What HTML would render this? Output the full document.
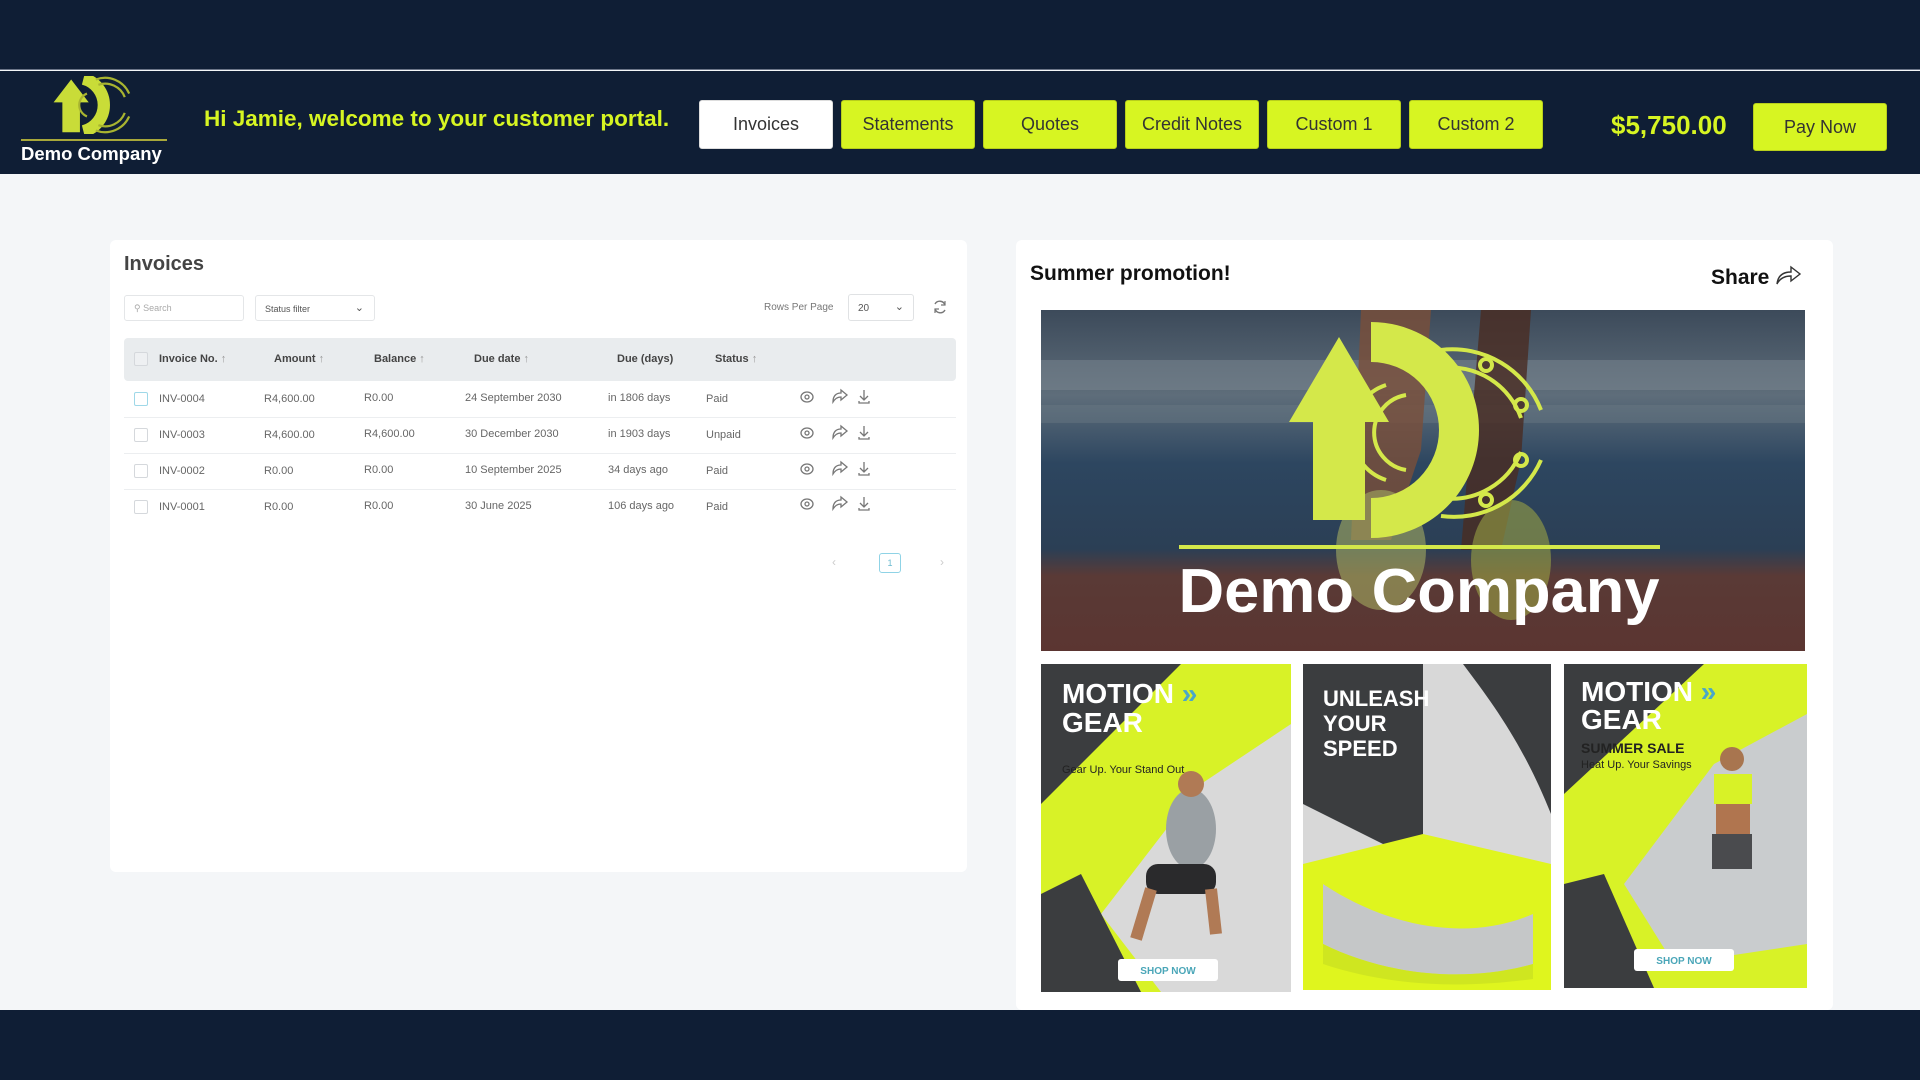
<!DOCTYPE html>
<html><head><meta charset="utf-8"><style>
*{margin:0;padding:0;box-sizing:border-box}
body{width:1920px;height:1080px;background:#f4f6f8;font-family:"Liberation Sans",sans-serif;position:relative;overflow:hidden}
.a{position:absolute}
.top{left:0;top:0;width:1920px;height:70px;background:#0f1e35;border-bottom:1px solid #6b7588}
.hdr{left:0;top:71px;width:1920px;height:103px;background:#0f1e35}
.bot{left:0;top:1010px;width:1920px;height:70px;background:#0f1e35}
.btn{top:100px;width:134px;height:49px;background:#d7f522;border-radius:3px;color:#333;font-size:18px;display:flex;align-items:center;justify-content:center;border:1px solid #b8cf1c}
.card{background:#fff;border-radius:6px}
.th{font-size:11px;font-weight:bold;color:#444}
.td{font-size:11px;color:#666}
.cb{width:14px;height:14px;border:1px solid #d5d8dc;border-radius:2px;background:#fff}
.rowline{left:124px;width:832px;height:1px;background:#eceef0}
</style></head><body>
<div class="a top"></div>
<div class="a hdr"></div>
<div class="a bot"></div>

<!-- header logo -->
<svg class="a" style="left:50px;top:76px" width="88" height="58" viewBox="0 0 100 66">
<polygon points="4,30 24,4 44,30 34,30 34,64 14,64 14,30" fill="#c9dc38"/>
<path d="M38 3 A31 31 0 0 1 38 63" fill="none" stroke="#c9dc38" stroke-width="14"/>
<g fill="none" stroke="#a8b430" stroke-width="2.5"><path d="M52 4 A30 30 0 0 1 90 20"/><path d="M55 10 A24 24 0 0 1 85 24"/><path d="M52 62 A30 30 0 0 0 90 46"/><path d="M55 56 A24 24 0 0 0 85 42"/><path d="M42 20 A14 14 0 0 0 42 46"/></g>
</svg>
<div class="a" style="left:21px;top:139px;width:146px;height:2px;background:#a8a83a"></div>
<div class="a" style="left:21px;top:143px;width:150px;color:#fff;font-weight:bold;font-size:18.5px">Demo Company</div>

<div class="a" style="left:204px;top:106px;color:#d7f522;font-weight:bold;font-size:22.5px">Hi Jamie, welcome to your customer portal.</div>

<div class="a btn" style="left:699px;background:#fff;border-color:#ddd">Invoices</div>
<div class="a btn" style="left:841px">Statements</div>
<div class="a btn" style="left:983px">Quotes</div>
<div class="a btn" style="left:1125px">Credit Notes</div>
<div class="a btn" style="left:1267px">Custom 1</div>
<div class="a btn" style="left:1409px">Custom 2</div>
<div class="a" style="left:1611px;top:110px;color:#d7f522;font-weight:bold;font-size:26px">$5,750.00</div>
<div class="a btn" style="left:1753px;top:103px;height:48px">Pay Now</div>

<!-- invoices card -->
<div class="a card" style="left:110px;top:240px;width:857px;height:632px"></div>
<div class="a" style="left:124px;top:253px;font-size:20px;color:#444;font-weight:bold">Invoices</div>
<div class="a" style="left:124px;top:295px;width:120px;height:26px;border:1px solid #e4e6e8;border-radius:3px;font-size:9px;color:#aaa;padding:7px 0 0 9px">&#9906; Search</div>
<div class="a" style="left:255px;top:295px;width:120px;height:26px;border:1px solid #e4e6e8;border-radius:3px;font-size:9px;color:#555;padding:8px 0 0 9px">Status filter<span style="position:absolute;right:10px;top:5px;font-size:11px">&#8964;</span></div>
<div class="a" style="left:764px;top:302px;font-size:10px;color:#777">Rows Per Page</div>
<div class="a" style="left:848px;top:294px;width:66px;height:27px;border:1px solid #e0e2e4;border-radius:3px;font-size:10px;color:#555;padding:8px 0 0 9px">20<span style="position:absolute;right:9px;top:5px;font-size:11px">&#8964;</span></div>
<svg class="a" style="left:932px;top:299px" width="16" height="16" viewBox="0 0 16 16"><path d="M13 6 A5.5 5.5 0 0 0 3 5 M3 10 A5.5 5.5 0 0 0 13 11" fill="none" stroke="#777" stroke-width="1.4"/><path d="M13 2v4h-4 M3 14v-4h4" fill="none" stroke="#777" stroke-width="1.2"/></svg>

<div class="a" style="left:124px;top:338px;width:832px;height:43px;background:#e9ecee;border-radius:4px"></div>
<div class="a cb" style="left:134px;top:352px;background:#eef0f2"></div>
<div class="a th" style="left:159px;top:353px">Invoice No. <span style="color:#999">&#8593;</span></div>
<div class="a th" style="left:274px;top:353px">Amount <span style="color:#999">&#8593;</span></div>
<div class="a th" style="left:374px;top:353px">Balance <span style="color:#999">&#8593;</span></div>
<div class="a th" style="left:474px;top:353px">Due date <span style="color:#999">&#8593;</span></div>
<div class="a th" style="left:617px;top:353px">Due (days)</div>
<div class="a th" style="left:715px;top:353px">Status <span style="color:#999">&#8593;</span></div>

<div class="a cb" style="left:134px;top:392px;border-color:#9fd8e8"></div>
<div class="a td" style="left:159px;top:393px">INV-0004</div><div class="a td" style="left:264px;top:393px">R4,600.00</div><div class="a td" style="left:364px;top:392px">R0.00</div><div class="a td" style="left:465px;top:392px">24 September 2030</div><div class="a td" style="left:608px;top:392px">in 1806 days</div><div class="a td" style="left:706px;top:393px">Paid</div>
<div class="a rowline" style="top:417px"></div>
<div class="a cb" style="left:134px;top:428px"></div>
<div class="a td" style="left:159px;top:429px">INV-0003</div><div class="a td" style="left:264px;top:429px">R4,600.00</div><div class="a td" style="left:364px;top:428px">R4,600.00</div><div class="a td" style="left:465px;top:428px">30 December 2030</div><div class="a td" style="left:608px;top:428px">in 1903 days</div><div class="a td" style="left:706px;top:429px">Unpaid</div>
<div class="a rowline" style="top:453px"></div>
<div class="a cb" style="left:134px;top:464px"></div>
<div class="a td" style="left:159px;top:465px">INV-0002</div><div class="a td" style="left:264px;top:465px">R0.00</div><div class="a td" style="left:364px;top:464px">R0.00</div><div class="a td" style="left:465px;top:464px">10 September 2025</div><div class="a td" style="left:608px;top:464px">34 days ago</div><div class="a td" style="left:706px;top:465px">Paid</div>
<div class="a rowline" style="top:489px"></div>
<div class="a cb" style="left:134px;top:500px"></div>
<div class="a td" style="left:159px;top:501px">INV-0001</div><div class="a td" style="left:264px;top:501px">R0.00</div><div class="a td" style="left:364px;top:500px">R0.00</div><div class="a td" style="left:465px;top:500px">30 June 2025</div><div class="a td" style="left:608px;top:500px">106 days ago</div><div class="a td" style="left:706px;top:501px">Paid</div>

<svg class="a" style="left:796px;top:386px" width="84" height="130" viewBox="0 0 84 130">
<g fill="none" stroke="#777" stroke-width="1.3">
<g id="r"><ellipse cx="11" cy="11" rx="6" ry="5"/><circle cx="11" cy="11" r="2"/><path d="M37 16 C37 10 40 7 45 7 V4 L51 9 L45 14 V11 C41 11 39 13 37 16 Z"/><path d="M68 4 V13 M64 10 L68 14 L72 10 M63 15 V17 H73 V15"/></g>
<use href="#r" y="36"/><use href="#r" y="72"/><use href="#r" y="107"/>
</g></svg>

<div class="a" style="left:832px;top:555px;color:#ccc;font-size:12px">&#8249;</div>
<div class="a" style="left:879px;top:553px;width:22px;height:20px;border:1px solid #8fd3e6;border-radius:3px;font-size:9px;color:#6bbad0;text-align:center;padding-top:4px">1</div>
<div class="a" style="left:940px;top:555px;color:#ccc;font-size:12px">&#8250;</div>

<!-- promo card -->
<div class="a card" style="left:1016px;top:240px;width:817px;height:770px"></div>
<div class="a" style="left:1030px;top:262px;font-size:21px;font-weight:bold;color:#111">Summer promotion!</div>
<div class="a" style="left:1711px;top:266px;font-size:21px;font-weight:bold;color:#111">Share</div>
<svg class="a" style="left:1774px;top:264px" width="28" height="22" viewBox="0 0 28 22"><path d="M3 20 C4 11 10 8 17 8 V3 L26 10 L17 17 V12 C11 12 6 14 3 20 Z" fill="none" stroke="#333" stroke-width="1.4"/></svg>

<svg class="a" style="left:1041px;top:310px" width="764" height="341" viewBox="0 0 764 341">
<defs><linearGradient id="bg" x1="0" y1="0" x2="0" y2="1"><stop offset="0" stop-color="#3c4a5a"/><stop offset=".25" stop-color="#5e6d7a"/><stop offset=".45" stop-color="#2d4660"/><stop offset=".7" stop-color="#2b3f55"/><stop offset=".78" stop-color="#5a3a36"/><stop offset="1" stop-color="#5b3531"/></linearGradient></defs>
<rect width="764" height="341" fill="url(#bg)"/>
<rect x="0" y="50" width="764" height="30" fill="#7b8791" opacity=".5"/>
<rect x="0" y="95" width="764" height="18" fill="#6f7d87" opacity=".4"/>
<path d="M320 0 L390 0 L380 140 L350 230 L310 230 Z" fill="#7a4f3a" opacity=".8"/>
<path d="M440 0 L490 0 L480 150 L460 240 L420 240 Z" fill="#4a2c22" opacity=".8"/>
<ellipse cx="340" cy="240" rx="45" ry="60" fill="#a3ab60" opacity=".6"/>
<ellipse cx="470" cy="250" rx="40" ry="60" fill="#9aa244" opacity=".6"/>
<polygon points="248,112 298,27 348,112 324,112 324,210 272,210 272,112" fill="#d4e84a"/>
<path d="M330 32 A88 88 0 0 1 330 208" fill="none" stroke="#d4e84a" stroke-width="40"/>
<g fill="none" stroke="#d4e84a" stroke-width="4"><path d="M400 40 A95 95 0 0 1 500 100"/><path d="M400 58 A75 75 0 0 1 480 108"/><path d="M400 206 A95 95 0 0 0 500 150"/><path d="M400 188 A75 75 0 0 0 480 142"/><path d="M345 75 A50 50 0 0 0 345 170"/><path d="M365 85 A38 38 0 0 0 365 160"/><circle cx="445" cy="55" r="6"/><circle cx="480" cy="95" r="6"/><circle cx="480" cy="150" r="6"/><circle cx="445" cy="190" r="6"/></g>
<rect x="138" y="235" width="481" height="4" fill="#d4e84a"/>
<text x="378" y="302" text-anchor="middle" font-family="Liberation Sans" font-weight="bold" font-size="62" fill="#fff" textLength="481" lengthAdjust="spacingAndGlyphs">Demo Company</text>
</svg>

<!-- panel 1 -->
<svg class="a" style="left:1041px;top:664px" width="250" height="328" viewBox="0 0 250 328">
<rect width="250" height="328" fill="#d8f227"/>
<polygon points="0,0 140,0 0,140" fill="#3b3d3f"/>
<polygon points="250,60 250,328 120,328 60,250 160,120" fill="#d9d9d9"/>
<path d="M0 230 L40 210 L100 328 L0 328 Z" fill="#3b3d3f"/>
<text x="21" y="39" font-family="Liberation Sans" font-weight="bold" font-size="28" fill="#fff">MOTION <tspan fill="#4aa6c8">»</tspan></text>
<text x="21" y="68" font-family="Liberation Sans" font-weight="bold" font-size="28" fill="#fff">GEAR</text>
<text x="21" y="109" font-family="Liberation Sans" font-size="11" fill="#222">Gear Up. Your Stand Out</text>
<ellipse cx="150" cy="165" rx="25" ry="40" fill="#9aa0a4"/><circle cx="150" cy="120" r="13" fill="#b07a55"/>
<rect x="105" y="200" width="70" height="30" rx="12" fill="#2a2a2c"/><path d="M110 225 L95 275 M170 225 L175 270" stroke="#b07a55" stroke-width="12"/>
<rect x="77" y="295" width="100" height="22" rx="3" fill="#fff"/>
<text x="127" y="310" text-anchor="middle" font-family="Liberation Sans" font-weight="bold" font-size="10" fill="#4aa6b8">SHOP NOW</text>
</svg>
<!-- panel 2 -->
<svg class="a" style="left:1303px;top:664px" width="248" height="326" viewBox="0 0 248 326">
<rect width="248" height="326" fill="#d8d8d8"/>
<path d="M0 0 L120 0 L120 200 L0 140 Z" fill="#3b3d3f"/>
<path d="M160 0 L248 0 L248 150 C220 80 190 40 160 0 Z" fill="#3b3d3f"/>
<path d="M0 200 L120 170 L248 200 L248 326 L0 326 Z" fill="#dff51e"/>
<path d="M20 220 C80 260 160 280 230 250 L230 300 C160 320 80 310 20 280 Z" fill="#c5c7c8"/>
<path d="M20 280 C80 310 160 320 230 300 L230 315 C150 326 80 320 20 300 Z" fill="#cfe620"/>
<text x="20" y="42" font-family="Liberation Sans" font-weight="bold" font-size="22" fill="#fff">UNLEASH</text>
<text x="20" y="67" font-family="Liberation Sans" font-weight="bold" font-size="22" fill="#fff">YOUR</text>
<text x="20" y="92" font-family="Liberation Sans" font-weight="bold" font-size="22" fill="#fff">SPEED</text>
</svg>
<!-- panel 3 -->
<svg class="a" style="left:1564px;top:664px" width="243" height="324" viewBox="0 0 243 324">
<rect width="243" height="324" fill="#d8f227"/>
<polygon points="0,0 140,0 0,130" fill="#3b3d3f"/>
<polygon points="243,50 243,280 110,300 60,220 150,100" fill="#c9ccce"/>
<path d="M0 220 L40 210 L90 324 L0 324 Z" fill="#3b3d3f"/>
<text x="17" y="37" font-family="Liberation Sans" font-weight="bold" font-size="28" fill="#fff">MOTION <tspan fill="#4aa6c8">»</tspan></text>
<text x="17" y="65" font-family="Liberation Sans" font-weight="bold" font-size="28" fill="#fff">GEAR</text>
<text x="17" y="89" font-family="Liberation Sans" font-weight="bold" font-size="14" fill="#222">SUMMER SALE</text>
<text x="17" y="104" font-family="Liberation Sans" font-size="11" fill="#222">Heat Up. Your Savings</text>
<rect x="150" y="110" width="38" height="30" fill="#d8f227"/><circle cx="168" cy="95" r="12" fill="#a8754f"/><rect x="152" y="140" width="34" height="30" fill="#b0754f"/><rect x="148" y="170" width="40" height="35" fill="#4a4b4e"/>
<rect x="70" y="285" width="100" height="22" rx="3" fill="#fff"/>
<text x="120" y="300" text-anchor="middle" font-family="Liberation Sans" font-weight="bold" font-size="10" fill="#4aa6b8">SHOP NOW</text>
</svg>
</body></html>
